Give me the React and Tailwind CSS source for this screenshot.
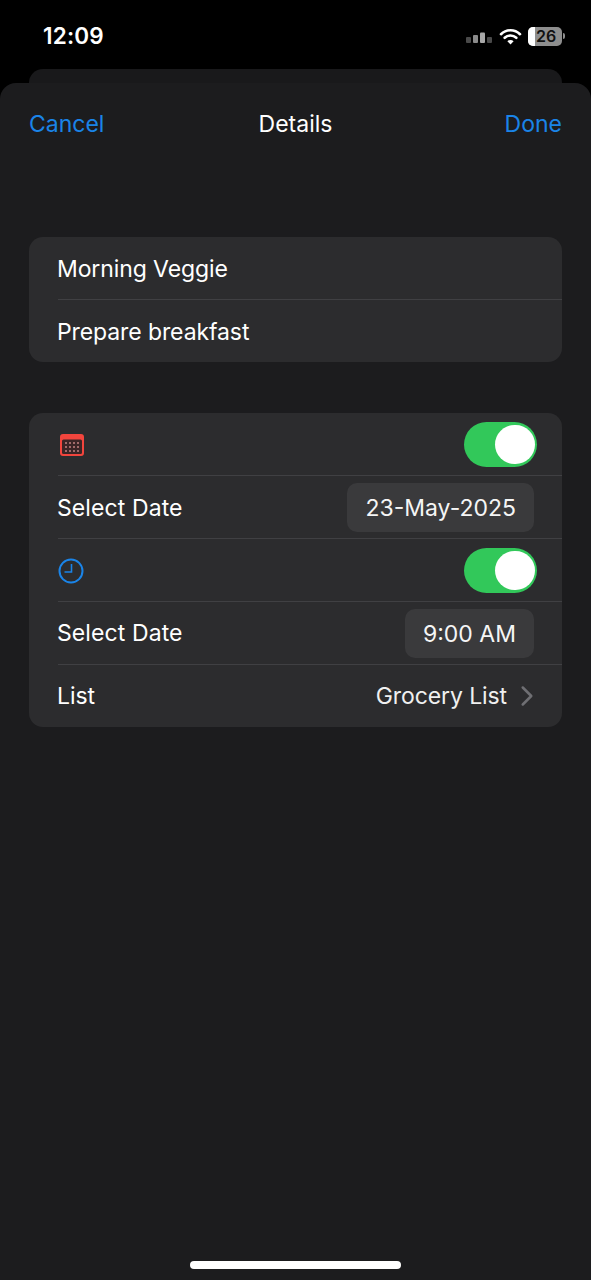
import { ChevronRight } from 'lucide-react'

const FONT = "font-['Inter','Liberation_Sans',sans-serif]"

function StatusIcons() {
  return (
    <div className="flex items-center">
      {/* signal */}
      <svg width="26" height="12" viewBox="0 0 26 12" className="mr-[7px] mt-[4px]">
        <rect x="0" y="5" width="5" height="6" rx="1" fill="#4a4a4a" />
        <rect x="7" y="3" width="5" height="8" rx="1" fill="#8a8a8a" />
        <rect x="14" y="0.5" width="5" height="10.5" rx="1" fill="#a8a8a8" />
        <rect x="21" y="5" width="5" height="6" rx="1" fill="#4a4a4a" />
      </svg>
      {/* wifi */}
      <svg width="23" height="17" viewBox="0 0 22 17" className="mr-[6px]">
        <path d="M1.5 6.2C6.8 1 15.2 1 20.5 6.2" fill="none" stroke="#fff" strokeWidth="2.6" strokeLinecap="round" />
        <path d="M5.2 9.8C8.5 6.7 13.5 6.7 16.8 9.8" fill="none" stroke="#fff" strokeWidth="2.6" strokeLinecap="round" />
        <path d="M11 16.5L7.9 13.2C9.7 11.6 12.3 11.6 14.1 13.2Z" fill="#fff" />
      </svg>
      {/* battery */}
      <div className="flex h-[19px] w-[34px] overflow-hidden rounded-[5px] bg-[#8e8e8e]">
        <div className="h-full w-[7px] shrink-0 bg-white" />
        <span className="pl-[1px] text-[16px] font-semibold leading-[19px] text-[#111]">26</span>
      </div>
      <div className="ml-[1px] h-[6px] w-[2px] rounded-r-sm bg-[#8e8e8e]" />
    </div>
  )
}

function Row({ children, short, last }) {
  return (
    <div className={`relative flex items-center pl-[28px] pr-[29px] tracking-[-0.1px] ${short ? 'h-[62px]' : 'h-[63px]'}`}>
      {children}
      {!last && <div className="absolute bottom-0 left-[29px] right-0 h-px bg-[#404043]" />}
    </div>
  )
}

function Toggle() {
  return (
    <div className="ml-auto mr-[-4px] flex h-[45px] w-[73px] items-center justify-end rounded-full bg-[#32c85a] pr-[2px]">
      <div className="h-[39px] w-[40px] rounded-full bg-white" />
    </div>
  )
}

function Pill({ children }) {
  return (
    <div className="ml-auto mr-[-1px] flex h-[49px] items-center rounded-[10px] bg-[#3a3a3c] px-[18px] pt-[1px] tracking-normal text-[#f5f5f5]">
      {children}
    </div>
  )
}

export default function App() {
  return (
    <div className={`flex h-[1280px] w-[591px] flex-col overflow-hidden bg-black text-white ${FONT}`}>
      <div className="flex h-[69px] shrink-0 items-center justify-between pt-[3px] pl-[43px] pr-[26px]">
        <span className="text-[22.5px] font-semibold tracking-[0.2px]">12:09</span>
        <StatusIcons />
      </div>
      <div className="mx-[29px] h-[14px] shrink-0 rounded-t-[14px] bg-[#19191b]" />

      {/* sheet */}
      <div className="flex flex-1 flex-col rounded-t-[16px] bg-[#1c1c1e]">
        <div className="flex h-[80px] items-center px-[29px] pt-[2px] text-[23px] text-[#1a84e8]">
          <span className="flex-1">Cancel</span>
          <span className="text-white">Details</span>
          <span className="flex-1 text-right">Done</span>
        </div>

        <div className="mx-[29px] mt-[74px] overflow-hidden rounded-[14px] bg-[#2c2c2e] text-[23px]">
          <Row><span className="pt-[1px]">Morning Veggie</span></Row>
          <Row short last><span className="pt-[2px]">Prepare breakfast</span></Row>
        </div>

        <div className="mx-[29px] mt-[51px] overflow-hidden rounded-[14px] bg-[#2c2c2e] text-[23px]">
          <Row>
            <svg width="26" height="24" viewBox="0 0 26 24" className="ml-[2px]">
              <rect x="1" y="1" width="24" height="22" rx="3" fill="#f2453d" />
              <rect x="3" y="6.5" width="20" height="14.5" rx="1.5" fill="#3a2526" />
              {[9, 13, 17].map(y => [6, 10, 14, 18].map(x => (
                <rect key={`${x}-${y}`} x={x} y={y} width="2" height="2" fill="#a06a6a" />
              )))}
            </svg>
            <Toggle />
          </Row>
          <Row>
            <span className="pt-[1px] tracking-[0.1px]">Select Date</span>
            <Pill>23-May-2025</Pill>
          </Row>
          <Row>
            <svg width="26" height="26" viewBox="0 0 26 26" className="ml-[1px]">
              <circle cx="13" cy="13" r="11.5" fill="none" stroke="#1a84e8" strokeWidth="2" />
              <path d="M13.5 6V14H6.5" fill="none" stroke="#1a84e8" strokeWidth="1.6" />
            </svg>
            <Toggle />
          </Row>
          <Row>
            <span className="tracking-[0.1px]">Select Date</span>
            <Pill>9:00 AM</Pill>
          </Row>
          <Row short last>
            <span className="pt-[1px]">List</span>
            <span className="ml-auto pt-[1px] text-[#f0f0f0]">Grocery List</span>
            <ChevronRight size={34} strokeWidth={1.8} className="ml-[3px] mr-[-11px] text-[#6f6f73]" />
          </Row>
        </div>

        <div className="mt-auto mb-[11px] h-[8px] w-[211px] self-center rounded-full bg-white" />
      </div>
    </div>
  )
}
